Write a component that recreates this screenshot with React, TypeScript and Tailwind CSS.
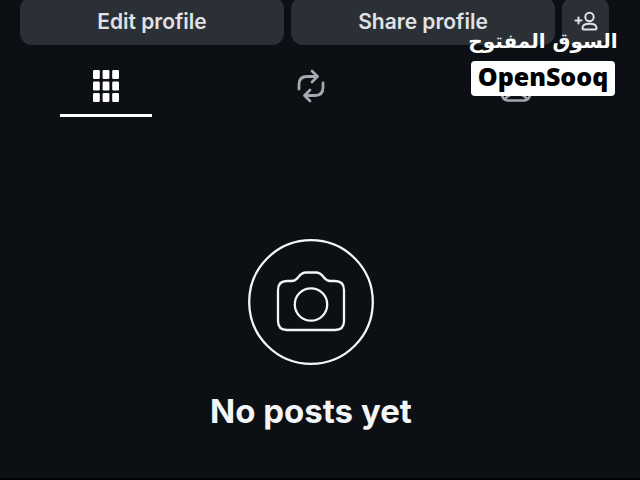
const cells = [0, 1, 2, 3, 4, 5, 6, 7, 8];

function GridIcon() {
  return (
    <svg viewBox="0 0 26 32" className="h-8 w-[26px]" fill="currentColor" aria-hidden="true">
      {cells.map((i) => (
        <rect
          key={i}
          x={(i % 3) * 9.6}
          y={Math.floor(i / 3) * 11.5}
          width="6.8"
          height="9"
          rx="1.2"
        />
      ))}
    </svg>
  );
}

function RepostIcon() {
  return (
    <svg
      viewBox="0 0 28 34"
      className="h-[34px] w-7"
      fill="none"
      stroke="currentColor"
      strokeWidth="2.8"
      strokeLinecap="round"
      strokeLinejoin="round"
      aria-hidden="true"
    >
      <path d="M2 20V15.5Q2 7.5 10 7.5H20" />
      <path d="M15 2L20.5 7.500L15 13" />
      <path d="M26 14V18.5Q26 26.500 18 26.500H8" />
      <path d="M13 21L7.500 26.500L13 32" />
    </svg>
  );
}

function TaggedIcon() {
  return (
    <svg
      viewBox="0 0 32 34"
      className="h-[34px] w-8"
      fill="none"
      stroke="currentColor"
      strokeWidth="2.6"
      strokeLinejoin="round"
      aria-hidden="true"
    >
      <rect x="2" y="3" width="28" height="28.5" rx="6" />
      <circle cx="16" cy="15" r="5" />
      <path d="M5 30C8 26 11 25 16 25S24 26 27 30" />
    </svg>
  );
}

function AddPersonIcon() {
  return (
    <svg
      viewBox="0 0 24 20"
      className="h-5 w-6"
      fill="none"
      stroke="currentColor"
      strokeWidth="2"
      strokeLinecap="round"
      aria-hidden="true"
    >
      <path d="M1.500 9.500H7.500M4.500 6.500V12.500" />
      <circle cx="15.500" cy="6" r="4.200" />
      <path d="M8.500 17C8.500 14 11 12.800 15.500 12.800S22.500 14 22.500 17Q22.500 18.500 21 18.500H10Q8.500 18.500 8.500 17Z" />
    </svg>
  );
}

function CameraIcon() {
  return (
    <svg
      viewBox="0 0 126 126"
      className="h-[126px] w-[126px]"
      fill="none"
      stroke="currentColor"
      strokeWidth="2.3"
      strokeLinejoin="round"
      aria-hidden="true"
    >
      <circle cx="63" cy="63" r="61.8" />
      <path d="M39 42H44C51 42 50 33.500 58 33.500H68C76 33.500 75 42 82 42H87Q96 42 96 51V82Q96 91 87 91H39Q30 91 30 82V51Q30 42 39 42Z" />
      <circle cx="63" cy="65.500" r="16.200" />
    </svg>
  );
}

const tabs = [
  { label: "Posts", icon: <GridIcon />, active: true },
  { label: "Reposts", icon: <RepostIcon />, active: false },
  { label: "Tagged", icon: <TaggedIcon />, active: false },
];

export default function App() {
  return (
    <div className="relative flex min-h-screen flex-col overflow-hidden border-b-2 border-black bg-[#0c1014] pr-[18px] font-['Inter','Liberation_Sans',sans-serif] text-[#f3f5f7]">
      {/* Profile actions */}
      <div className="-mt-[3px] flex gap-[7px] pr-[13px] pl-5 text-[21px] font-semibold text-[#e0e2e6]">
        <button type="button" className="h-12 flex-1 rounded-xl bg-[#2b3036] pt-0.5">
          Edit profile
        </button>
        <button type="button" className="h-12 flex-1 rounded-xl bg-[#2b3036] pt-0.5">
          Share profile
        </button>
        <button
          type="button"
          aria-label="Discover people"
          className="flex h-12 w-[47px] items-center justify-center rounded-xl bg-[#2b3036]"
        >
          <AddPersonIcon />
        </button>
      </div>

      {/* Tabs */}
      <div role="tablist" className="grid grid-cols-3 px-1 pt-6">
        {tabs.map((tab) => (
          <button
            key={tab.label}
            type="button"
            role="tab"
            aria-label={tab.label}
            aria-selected={tab.active}
            className={`flex flex-col items-center gap-[11px] ${tab.active ? "text-white" : "text-[#a5a8ae]"}`}
          >
            <span className="flex h-[34px] items-center">{tab.icon}</span>
            <span className={`h-[3px] w-[92px] ${tab.active ? "bg-white" : ""}`} />
          </button>
        ))}
      </div>

      {/* Empty state */}
      <main className="flex flex-col items-center pt-[122px]">
        <CameraIcon />
        <h1 className="mt-6 text-[33px] leading-[44px] font-bold">No posts yet</h1>
      </main>

      {/* Watermark */}
      <div className="absolute top-[21px] right-[25px] flex w-36 flex-col items-center text-white">
        <span
          lang="ar"
          dir="rtl"
          className="font-['DejaVu_Sans',sans-serif] text-xl leading-10 font-bold whitespace-nowrap"
        >
          السوق المفتوح
        </span>
        <span className="flex h-[35px] w-full items-center justify-center rounded-sm bg-white pb-1 font-['Noto_Sans','Open_Sans',sans-serif] text-[25px] leading-none font-black text-black">
          OpenSooq
        </span>
      </div>
    </div>
  );
}
